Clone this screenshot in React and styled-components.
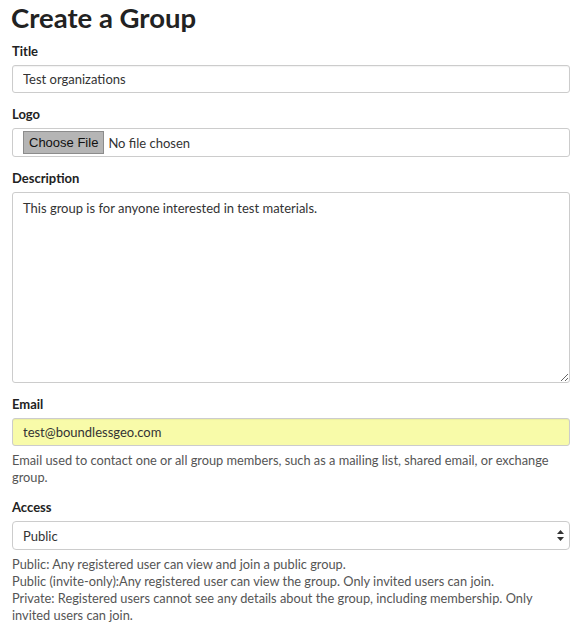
import styled, { createGlobalStyle } from "styled-components";

const GlobalStyle = createGlobalStyle`
  body {
    margin: 0;
    background: #fff;
    font-family: Lato, "Open Sans", sans-serif;
    color: #333;
  }
`;

const Page = styled.form`
  padding: 0 6px 0 12px;
`;

const Heading = styled.h1`
  margin: 0 0 7px -1px;
  font-size: 27.5px;
  line-height: 35px;
  font-weight: 700;
  color: #222;
`;

const Field = styled.div`
  display: flex;
  flex-direction: column;
  margin-bottom: 12px;
`;

const Label = styled.label`
  font-size: 13px;
  font-weight: 700;
  line-height: 18px;
  margin-bottom: 5px;
  color: #222;
`;

const Input = styled.input`
  box-sizing: border-box;
  height: 28px;
  width: 100%;
  padding: 0 10px;
  border: 1px solid #ccc;
  border-radius: 3px;
  font-family: Lato, sans-serif;
  font-size: 13px;
  color: #333;
  background: ${(p) => (p.$filled ? "#f8fba9" : "#fff")};
  box-shadow: inset 0 1px 1px rgba(0, 0, 0, 0.05);
  outline: none;
`;

const FileBox = styled.div`
  box-sizing: border-box;
  height: 29px;
  display: flex;
  align-items: center;
  gap: 4px;
  padding: 0 10px;
  border: 1px solid #ccc;
  border-radius: 3px;
  font-size: 13px;
  color: #333;
`;

const FileButton = styled.span`
  display: inline-block;
  height: 21px;
  line-height: 21px;
  padding: 0 5px;
  background: #b5b5b5;
  border: 1px solid #8c8c8c;
  font-family: "Liberation Sans", Arial, sans-serif;
  font-size: 13px;
  color: #111;
`;

const TextArea = styled.textarea`
  box-sizing: border-box;
  height: 191px;
  width: 100%;
  padding: 6px 10px;
  border: 1px solid #ccc;
  border-radius: 3px;
  font-family: Lato, sans-serif;
  font-size: 13px;
  line-height: 18px;
  color: #333;
  resize: vertical;
  outline: none;
`;

const SelectBox = styled.div`
  position: relative;
  box-sizing: border-box;
  height: 29px;
  display: flex;
  align-items: center;
  padding: 0 10px;
  border: 1px solid #ccc;
  border-radius: 4px;
  font-size: 13px;
  color: #333;
`;

const Arrows = styled.svg`
  position: absolute;
  right: 5px;
  top: 8px;
`;

const Help = styled.p`
  margin: 6px 0 0;
  font-size: 12.8px;
  line-height: 17px;
  color: #555;
`;

export default function App() {
  return (
    <>
      <GlobalStyle />
      <Page>
        <Heading>Create a Group</Heading>
        <Field>
          <Label>Title</Label>
          <Input defaultValue="Test organizations" />
        </Field>
        <Field>
          <Label>Logo</Label>
          <FileBox>
            <FileButton>Choose File</FileButton>
            <span>No file chosen</span>
          </FileBox>
        </Field>
        <Field>
          <Label>Description</Label>
          <TextArea defaultValue="This group is for anyone interested in test materials." />
        </Field>
        <Field>
          <Label>Email</Label>
          <Input $filled defaultValue="test@boundlessgeo.com" />
          <Help>
            Email used to contact one or all group members, such as a mailing list, shared email, or exchange
            group.
          </Help>
        </Field>
        <Field>
          <Label>Access</Label>
          <SelectBox>
            Public
            <Arrows width="7" height="11" viewBox="0 0 7 11">
              <path d="M3.5 0 L7 4 H0 Z" fill="#333" />
              <path d="M3.5 11 L7 7 H0 Z" fill="#333" />
            </Arrows>
          </SelectBox>
          <Help>
            Public: Any registered user can view and join a public group.
            <br />
            Public (invite-only):Any registered user can view the group. Only invited users can join.
            <br />
            Private: Registered users cannot see any details about the group, including membership. Only
            invited users can join.
          </Help>
        </Field>
      </Page>
    </>
  );
}
